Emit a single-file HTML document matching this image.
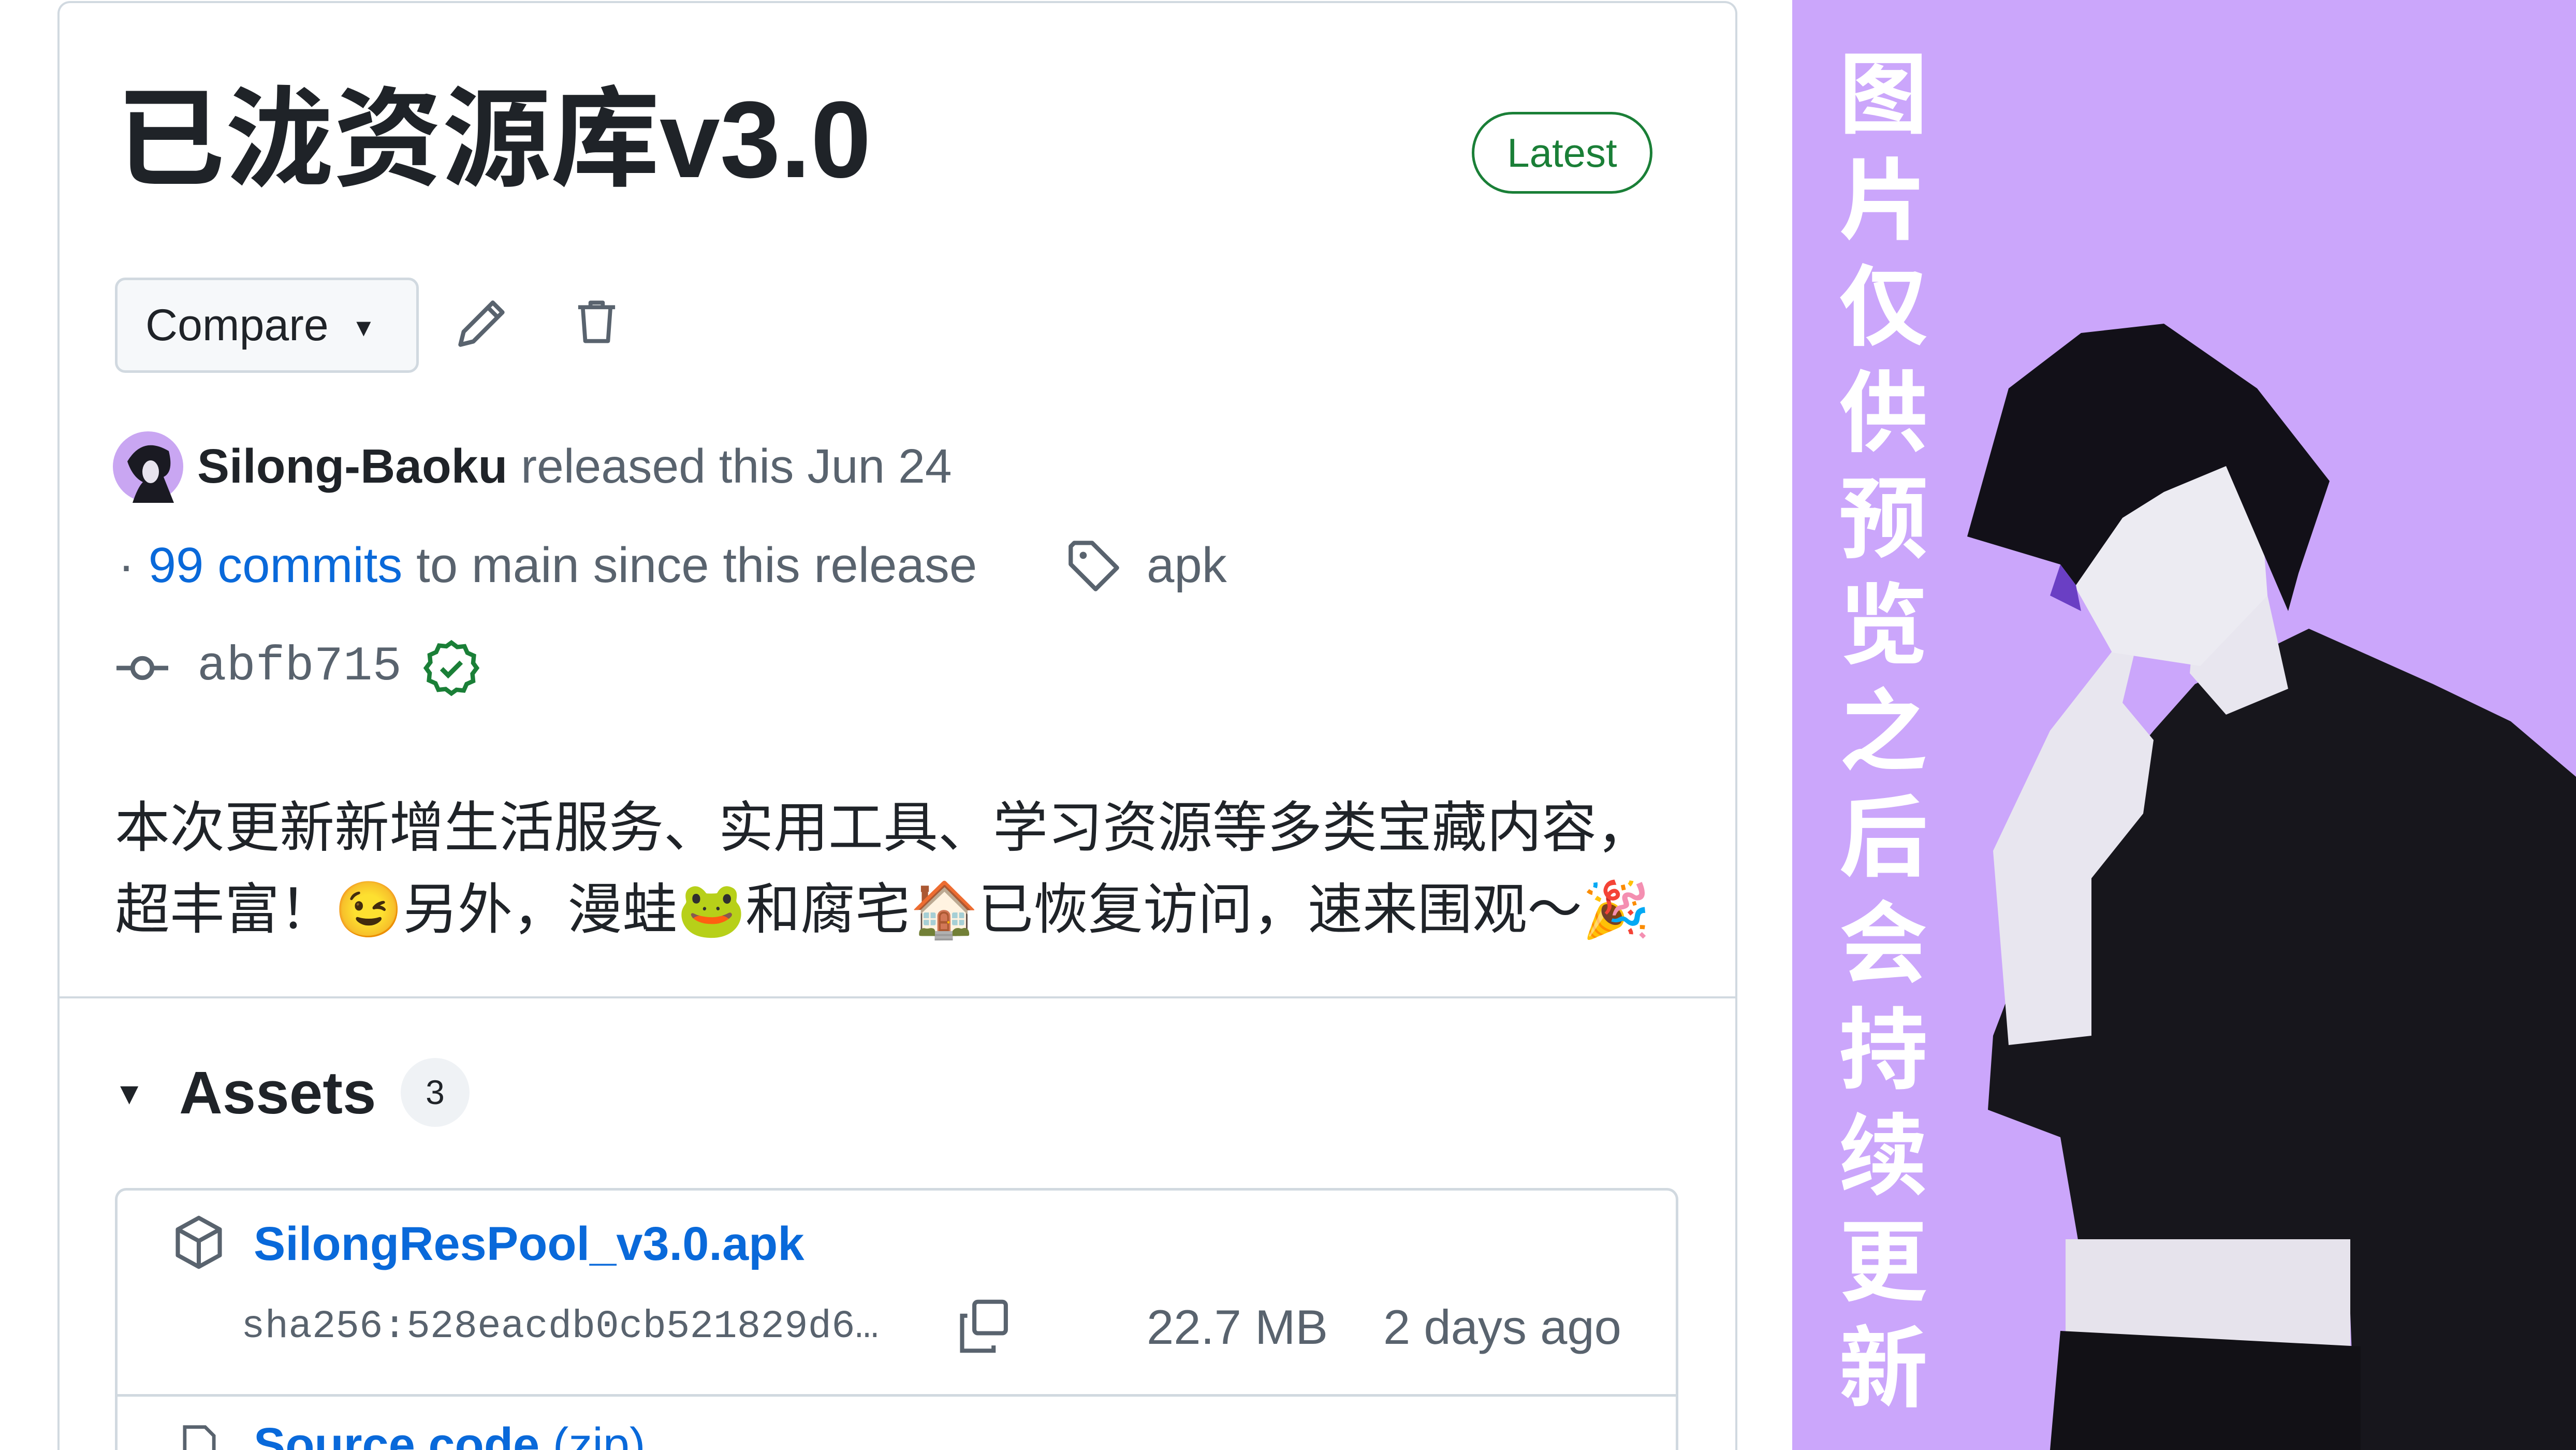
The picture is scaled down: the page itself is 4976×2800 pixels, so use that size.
<!DOCTYPE html>
<html style="width:4976px;height:2800px;overflow:hidden"><head><meta charset="utf-8"><style>
*{margin:0;padding:0;box-sizing:border-box}
body{width:4976px;height:2800px;overflow:hidden;background:#fff;position:relative;font-family:"Liberation Sans","Noto Sans CJK SC",sans-serif;color:#1f2328}
.a{position:absolute;white-space:nowrap}
.card{position:absolute;left:111px;top:2px;width:3245px;height:2798px;border:4px solid #d1d9e0;border-bottom:none;border-radius:24px 24px 0 0}
.sep{position:absolute;left:111px;top:1924px;width:3245px;height:4px;background:#d1d9e0}
.muted{color:#59636e}
</style></head><body>
<div class="card"></div>
<div class="sep"></div>
<div class="a" style="left:224px;top:145px;font-size:210px;font-weight:bold;line-height:250px;font-family:'Liberation Sans','Noto Sans CJK SC',sans-serif">已泷资源库v3.0</div>
<div class="a" style="left:2843px;top:216px;width:349px;height:158px;border:5px solid #1a7f37;border-radius:80px;color:#1a7f37;font-size:78px;line-height:148px;text-align:center">Latest</div>
<div class="a" style="left:222px;top:536px;width:587px;height:184px;border:5px solid #d1d9e0;border-radius:20px;background:#f6f8fa;font-size:86px;line-height:174px;padding-left:54px">Compare <span style="font-size:48px;position:relative;top:-8px;left:20px">▼</span></div>
<svg class="a" style="left:880px;top:570px" width="100" height="110" viewBox="0 0 16 16"><path d="M11.5 1.5l3 3-9 9-4 1 1-4z M10 3l3 3" fill="none" stroke="#59636e" stroke-width="1.3" stroke-linejoin="round"/></svg>
<svg class="a" style="left:1105px;top:565px" width="95" height="110" viewBox="0 0 16 16"><path d="M2 3.5h12 M6 3.5V2h4v1.5 M3.5 3.5l.8 11h7.4l.8-11" fill="none" stroke="#59636e" stroke-width="1.3" stroke-linejoin="round"/></svg>
<svg class="a" style="left:216px;top:831px" width="140" height="140"><circle cx="70" cy="70" r="68" fill="#c9a6f2"/><path d="M30 60 Q60 10 110 40 Q120 80 100 90 L120 140 L40 140 Q50 110 60 100 Q40 90 30 60Z" fill="#1a1a22"/><ellipse cx="75" cy="80" rx="16" ry="22" fill="#e8e4ee"/></svg>
<div class="a" style="left:381px;top:842px;font-size:93px;line-height:116px"><b style="color:#1f2328;font-weight:bold">Silong-Baoku</b> <span class="muted">released this Jun 24</span></div>
<div class="a muted" style="left:228px;top:1034px;font-size:96px;line-height:116px">· <span style="color:#0969da">99 commits</span> to main since this release</div>
<svg class="a" style="left:2058px;top:1038px" width="110" height="110" viewBox="0 0 16 16"><path d="M1.5 2.5v5l7 7 6-6-7-7h-5z" fill="none" stroke="#59636e" stroke-width="1.2" stroke-linejoin="round"/><circle cx="5" cy="5" r="1" fill="#59636e"/></svg>
<div class="a muted" style="left:2215px;top:1034px;font-size:96px;line-height:116px">apk</div>
<svg class="a" style="left:220px;top:1240px" width="110" height="100" viewBox="0 0 16 16"><circle cx="8" cy="8" r="3" fill="none" stroke="#59636e" stroke-width="1.4"/><path d="M0 8h5 M11 8h5" stroke="#59636e" stroke-width="1.4"/></svg>
<div class="a muted" style="left:381px;top:1230px;font-size:94px;line-height:116px;font-family:'Liberation Mono',monospace">abfb715</div>
<svg class="a" style="left:816px;top:1234px" width="112" height="112" viewBox="0 0 16 16"><path d="M8 1l1.6 1.2 2-.2.8 1.8 1.8.8-.2 2L15 8l-1.2 1.6.2 2-1.8.8-.8 1.8-2-.2L8 15l-1.6-1.2-2 .2-.8-1.8-1.8-.8.2-2L1 8l1.2-1.6-.2-2 1.8-.8.8-1.8 2 .2z" fill="none" stroke="#1a7f37" stroke-width="1.2"/><path d="M5.3 8.2l1.8 1.8 3.6-3.6" fill="none" stroke="#1a7f37" stroke-width="1.3"/></svg>
<div class="a" style="left:222px;top:1520px;font-size:106px;line-height:158px;font-family:'Liberation Sans','Noto Sans CJK SC',sans-serif">本次更新新增生活服务、实用工具、学习资源等多类宝藏内容，<br>超丰富！😉另外，漫蛙🐸和腐宅🏠已恢复访问，速来围观～🎉</div>
<div class="a" style="left:220px;top:2082px;font-size:60px;line-height:60px">▼</div>
<div class="a" style="left:346px;top:2040px;font-size:116px;font-weight:bold;line-height:140px">Assets</div>
<div class="a" style="left:774px;top:2043px;width:133px;height:133px;border-radius:67px;background:#eff2f5;font-size:66px;line-height:133px;text-align:center">3</div>
<div class="a" style="left:222px;top:2294px;width:3020px;height:506px;border:5px solid #d1d9e0;border-bottom:none;border-radius:22px 22px 0 0"></div>
<div class="a" style="left:222px;top:2692px;width:3020px;height:5px;background:#d1d9e0"></div>
<svg class="a" style="left:330px;top:2345px" width="108" height="108" viewBox="0 0 16 16"><path d="M8 1l6 3.3v7.4L8 15l-6-3.3V4.3z M2 4.3L8 7.6l6-3.3 M8 7.6V15" fill="none" stroke="#59636e" stroke-width="1.2" stroke-linejoin="round"/></svg>
<div class="a" style="left:490px;top:2342px;font-size:92px;font-weight:bold;color:#0969da;line-height:120px">SilongResPool_v3.0.apk</div>
<div class="a muted" style="left:466px;top:2514px;font-size:76px;line-height:96px;font-family:'Liberation Mono',monospace">sha256:528eacdb0cb521829d6…</div>
<svg class="a" style="left:1845px;top:2505px" width="108" height="112" viewBox="0 0 16 16"><rect x="5.5" y="1" width="9" height="9" rx="1" fill="none" stroke="#59636e" stroke-width="1.2"/><path d="M3.5 5H2v10h9v-1.5" fill="none" stroke="#59636e" stroke-width="1.2"/></svg>
<div class="a muted" style="left:2215px;top:2505px;font-size:94px;line-height:116px">22.7 MB</div>
<div class="a muted" style="left:2672px;top:2505px;font-size:94px;line-height:116px">2 days ago</div>
<div class="a" style="left:0;top:2730px;width:3400px;height:70px;overflow:hidden">
<svg class="a" style="left:340px;top:15px" width="90" height="100" viewBox="0 0 16 16"><path d="M3 1h7l3 3v11H3z" fill="none" stroke="#59636e" stroke-width="1.2"/></svg>
<div class="a" style="left:490px;top:0;font-size:92px;font-weight:bold;color:#0969da;line-height:120px">Source code <span style="font-weight:normal">(zip)</span></div>
</div>

<div class="a" style="left:3462px;top:0;width:1514px;height:2800px;background:#cba6fb"></div>
<svg class="a" style="left:3462px;top:0" width="1514" height="2800" viewBox="3462 0 1514 2800">
<polygon points="4240,1321 4460,1214 4700,1321 4850,1393 4976,1500 4976,2800 4550,2800 4540,2536 4400,2464 4020,2429 3980,2196 3840,2143 3850,2000 4000,1607 4160,1411" fill="#17161c"/>
<polygon points="3990,2393 4540,2393 4540,2700 3990,2700" fill="#e6e3ec"/>
<polygon points="3980,2570 4560,2600 4560,2800 3960,2800" fill="#121116"/>
<polygon points="3850,1643 3960,1411 4100,1232 4130,1232 4100,1357 4160,1429 4140,1571 4040,1696 4040,2000 3880,2018" fill="#e8e6ef"/>
<polygon points="4240,1180 4380,1150 4420,1330 4300,1380 4230,1300" fill="#e8e6ef"/>
<polygon points="3980,900 4160,800 4360,880 4380,1150 4250,1286 4080,1260 3990,1100" fill="#ecebf2"/>
<polygon points="3800,1036 3880,750 4020,643 4180,625 4360,750 4500,929 4440,1107 4420,1180 4360,1040 4300,900 4180,950 4100,1000 4010,1130 3980,1090" fill="#121018"/>
<polygon points="3980,1090 4010,1130 4020,1180 3960,1150" fill="#6a3fc4"/>
</svg>
<div class="a" style="left:3548px;top:66px;width:180px;font-size:172px;line-height:205px;font-weight:bold;color:#fff;white-space:normal;font-family:'Noto Sans CJK SC',sans-serif;text-align:center">图片仅供预览之后会持续更新</div>
</body></html>
